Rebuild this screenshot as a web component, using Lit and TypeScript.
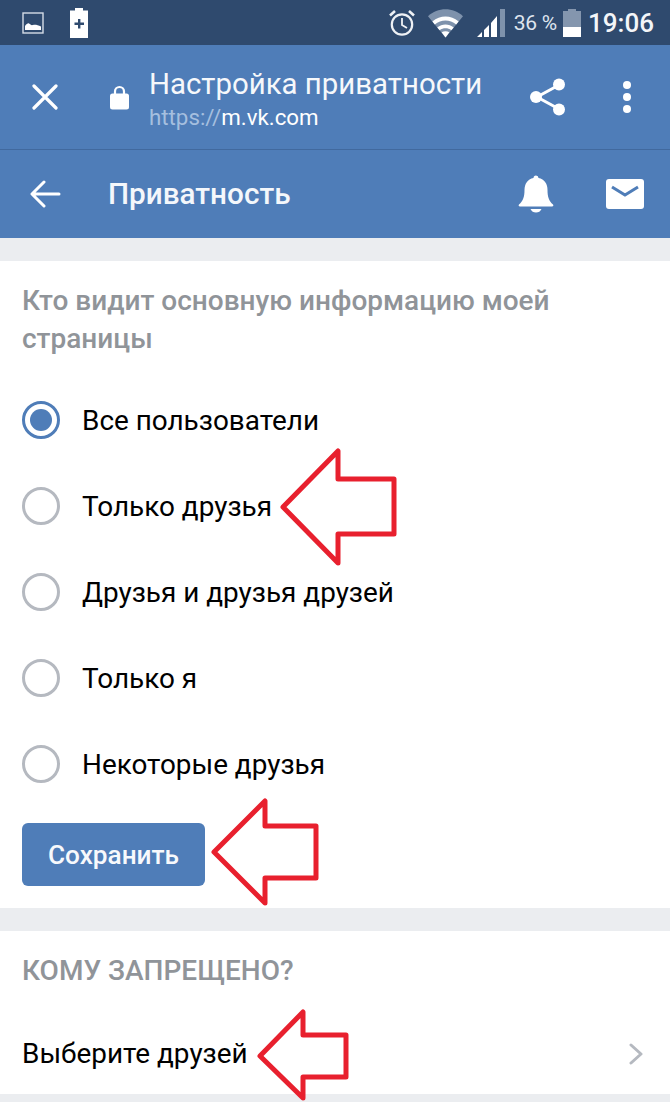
import { LitElement, html, css, svg } from "lit";
import { customElement } from "lit/decorators.js";

const OPTIONS = [
  { label: "Все пользователи", on: true },
  { label: "Только друзья", on: false },
  { label: "Друзья и друзья друзей", on: false },
  { label: "Только я", on: false },
  { label: "Некоторые друзья", on: false },
];

const ARROWS = [
  "283,507 338,451 338,479 394,479 394,534 338,534 338,563",
  "214,852 265,801 265,826 316,826 316,878 265,878 265,903",
  "260,1056 303,1012 303,1035 346,1035 346,1077 303,1077 303,1098",
];

@customElement("app-root")
export class AppRoot extends LitElement {
  static styles = css`
    :host {
      display: block;
      position: relative;
      width: 670px;
      height: 1102px;
      overflow: hidden;
      background: #ebedf0;
      font-family: Roboto, "Noto Sans", sans-serif;
    }
    .status {
      height: 45px;
      background: #2f4a6e;
      display: flex;
      align-items: center;
      padding: 0 16px 0 22px;
      color: #fff;
    }
    .status svg { display: block; flex: none; }
    .pic { margin-right: 25px; }
    .spacer { flex: 1; }
    .alarm { margin-right: 12px; }
    .wifi { margin-right: 14px; width: 35px; }
    .signal { margin-right: 9px; }
    .pct { font-size: 21px; color: #dfe5ee; margin-right: 6px; letter-spacing: -0.2px; }
    .batt { margin-right: 7px; }
    .time { font-size: 26px; font-weight: 500; color: #f4f6f9; }

    .browser {
      height: 104px;
      background: #4f7db8;
      border-bottom: 1px solid #41699e;
      display: flex;
      align-items: center;
      color: #fff;
    }
    .browser .close { margin-left: 32px; margin-right: 52px; flex: none; }
    .browser .lock { margin-right: 20px; flex: none; }
    .titles { flex: 1; display: flex; flex-direction: column; margin-top: 3px; }
    .t1 { font-size: 29.4px; line-height: 34px; color: #f6f8fb; white-space: nowrap; }
    .t2 { font-size: 22.3px; line-height: 26px; color: #fff; margin-top: 3px; }
    .t2 span { color: #a5bfdf; }
    .browser .share { margin-right: 56px; flex: none; }
    .browser .dots { margin-right: 38px; flex: none; }

    .nav {
      height: 88px;
      background: #4f7db8;
      display: flex;
      align-items: center;
      color: #fff;
    }
    .nav .back { margin-left: 30px; margin-right: 47px; flex: none; }
    .nav .title { flex: 1; font-size: 29.7px; font-weight: 500; color: #f4f7fb; margin-top: -2px; }
    .nav .bell { margin-right: 52px; flex: none; }
    .nav .mail { margin-right: 26px; flex: none; }

    .card { background: #fff; }
    .first {
      margin-top: 23px;
      height: 647px;
      padding: 21px 22px 0;
      box-sizing: border-box;
    }
    .second {
      margin-top: 23px;
      height: 163px;
      padding: 0 22px;
      box-sizing: border-box;
    }
    .head {
      font-size: 28px;
      line-height: 38px;
      font-weight: 500;
      color: #909499;
    }
    .opts { margin-top: 19px; display: flex; flex-direction: column; }
    .opt {
      height: 86px;
      display: flex;
      align-items: center;
      gap: 22px;
      font-size: 27.9px;
      color: #000;
    }
    .radio {
      width: 38px;
      height: 38px;
      box-sizing: border-box;
      border: 3px solid #b5b9c0;
      border-radius: 50%;
      flex: none;
      display: flex;
      align-items: center;
      justify-content: center;
    }
    .radio.on { border-color: #4f7db8; }
    .radio.on::after {
      content: "";
      width: 22px;
      height: 22px;
      border-radius: 50%;
      background: #4f7db8;
    }
    .save {
      display: flex;
      align-items: center;
      justify-content: center;
      width: 183px;
      height: 63px;
      margin-top: 16px;
      border: 0;
      padding: 0;
      border-radius: 6px;
      background: #4f7db8;
      color: #f7f9fc;
      font: 500 26.2px Roboto, sans-serif;
    }
    .upper {
      padding-top: 22px;
      font-size: 28px;
      line-height: 36px;
      font-weight: 500;
      color: #909499;
      white-space: nowrap;
    }
    .row {
      margin-top: 47px;
      display: flex;
      align-items: center;
      justify-content: space-between;
      font-size: 27.9px;
      line-height: 36px;
      color: #000;
    }
    .row svg { margin-right: 5px; }
    .overlay { position: absolute; left: 0; top: 0; pointer-events: none; }
  `;

  render() {
    return html`
      <div class="status">
        <svg class="pic" width="22" height="22" viewBox="0 0 22 22">
          <rect x="1" y="1" width="20" height="20" fill="none" stroke="#d5dce6" stroke-width="1.4"/>
          <path d="M3 18v-4c1.500-2 3-3 4-2.500 1.500 1 2 2 4 1.500 2-.5 5 0 8 1.500V18z" fill="#fff"/>
        </svg>
        <svg class="charge" width="20" height="30" viewBox="0 0 20 30">
          <path d="M6 0h8v2.500h5V30H1V2.500h5z" fill="#fff"/>
          <path d="M9 11h2.400v3.500H15v2.400h-3.600v3.600H9v-3.600H5.500v-2.400H9z" fill="#2f4a6e"/>
        </svg>
        <div class="spacer"></div>
        <svg class="alarm" width="28" height="28" viewBox="0 0 28 28" fill="none" stroke="#eef1f5">
          <circle cx="14" cy="15.500" r="10.200" stroke-width="2.200"/>
          <path d="M14 9v7l5 3" stroke-width="1.800"/>
          <path d="M2 6.500 7 2M26 6.500 21 2" stroke-width="2.600"/>
        </svg>
        <svg class="wifi" height="30" viewBox="0 0 36 30">
          <path d="M0 8C10 -1.500 26 -1.500 36 8L18 30z" fill="#7e92ac"/>
          <path d="M4.500 13.500C12.500 6.500 23.500 6.500 31.500 13.500l-2.500 3C22.500 11 13.500 11 7 16.500z" fill="#fff"/>
          <path d="M9.500 19.500C14.500 15.500 21.500 15.500 26.500 19.500l-2.500 3C20.500 19.800 15.500 19.800 12 22.500z" fill="#fff"/>
          <path d="M14 24.500c2.500-1.500 5.500-1.500 8 0L18 30z" fill="#fff"/>
        </svg>
        <svg class="signal" width="28" height="28" viewBox="0 0 28 28">
          <path d="M23 0h5v28h-5z" fill="#7e92ac"/>
          <path d="M0 28 5 23v5zM7 28v-7l5-5v12zM14 28V14l6-7v21z" fill="#fff"/>
        </svg>
        <span class="pct">36 %</span>
        <svg class="batt" width="18" height="28" viewBox="0 0 18 28">
          <path d="M5 0h8v2h5v26H0V2h5z" fill="#8496ae"/>
          <path d="M0 18h18v10H0z" fill="#fff"/>
        </svg>
        <span class="time">19:06</span>
      </div>

      <div class="browser">
        <svg class="close" width="26" height="26" viewBox="0 0 26 26" fill="none" stroke="#fff" stroke-width="3.200" stroke-linecap="round">
          <path d="M2 2 24 24M24 2 2 24"/>
        </svg>
        <svg class="lock" width="19" height="25" viewBox="0 0 19 25">
          <path d="M5 10V6.500a4.500 4.500 0 0 1 9 0V10" fill="none" stroke="#fff" stroke-width="2.200"/>
          <rect x="0" y="8.500" width="19" height="16" rx="2.500" fill="#fff"/>
        </svg>
        <div class="titles">
          <div class="t1">Настройка приватности</div>
          <div class="t2"><span>https://</span>m.vk.com</div>
        </div>
        <svg class="share" width="36" height="38" viewBox="0 0 36 38" fill="#fff" stroke="#fff">
          <path d="M29 7 7 19l22 12" fill="none" stroke-width="3"/>
          <circle cx="29" cy="6.500" r="6" stroke="none"/>
          <circle cx="6" cy="19" r="6" stroke="none"/>
          <circle cx="29" cy="31.500" r="6" stroke="none"/>
        </svg>
        <svg class="dots" width="10" height="32" viewBox="0 0 10 32" fill="#fff">
          <circle cx="5" cy="4" r="4"/><circle cx="5" cy="16" r="4"/><circle cx="5" cy="28" r="4"/>
        </svg>
      </div>

      <div class="nav">
        <svg class="back" width="31" height="28" viewBox="0 0 31 28" fill="none" stroke="#fff" stroke-width="3" stroke-linecap="round" stroke-linejoin="round">
          <path d="M29 14H3M14 2 2 14l12 12"/>
        </svg>
        <div class="title">Приватность</div>
        <svg class="bell" width="36" height="38" viewBox="0 0 36 38" fill="#fff">
          <path d="M15.500 3a2.500 2.500 0 0 1 5 0c6 1 9 6 9 12 0 7 1.500 11 5.500 14.500.8.800.3 2-1 2H2c-1.300 0-1.800-1.200-1-2C5 26 6.500 22 6.500 15c0-6 3-11 9-12z"/>
          <path d="M12.500 34h11c-1 2.500-3 3.500-5.500 3.500s-4.500-1-5.500-3.500z"/>
        </svg>
        <svg class="mail" width="38" height="31" viewBox="0 0 38 31">
          <rect width="38" height="30" rx="3" fill="#fff"/>
          <path d="M6 8 19 16 32 8" fill="none" stroke="#4f7db8" stroke-width="3"/>
        </svg>
      </div>

      <div class="card first">
        <div class="head">Кто видит основную информацию моей<br />страницы</div>
        <div class="opts">
          ${OPTIONS.map(
            (o) => html`<div class="opt">
              <span class="radio ${o.on ? "on" : ""}"></span>${o.label}
            </div>`
          )}
        </div>
        <button class="save">Сохранить</button>
      </div>

      <div class="card second">
        <div class="upper">КОМУ ЗАПРЕЩЕНО?</div>
        <div class="row">
          <span>Выберите друзей</span>
          <svg width="14" height="22" viewBox="0 0 14 22" fill="none" stroke="#b5b9c0" stroke-width="3" stroke-linecap="round" stroke-linejoin="round">
            <path d="M2 2 12 11 2 20"/>
          </svg>
        </div>
      </div>

      <svg class="overlay" width="670" height="1102" viewBox="0 0 670 1102">
        ${ARROWS.map(
          (p) => svg`<polygon points=${p} fill="none" stroke="#e8202e" stroke-width="5" stroke-linejoin="round"/>`
        )}
      </svg>
    `;
  }
}
